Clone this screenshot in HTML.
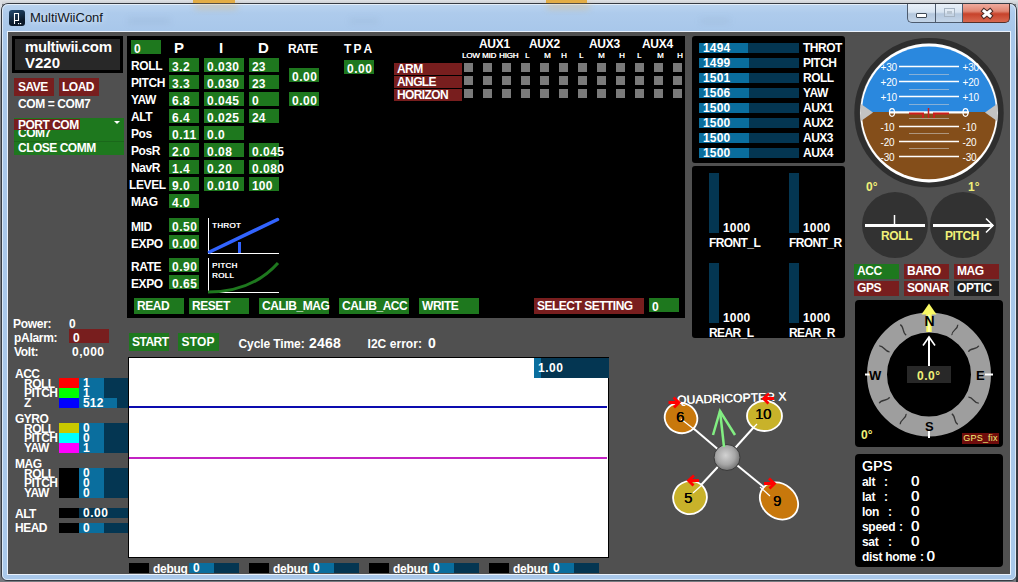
<!DOCTYPE html>
<html><head><meta charset="utf-8"><style>
html,body{margin:0;padding:0;width:1018px;height:582px;overflow:hidden;position:relative;background:#d5d9df}
div,svg{position:absolute}
.t{white-space:nowrap;font-family:'Liberation Sans', sans-serif}
</style></head><body>
<div style="left:0px;top:0px;width:1018px;height:582px;background:#767a80;"></div>
<div style="left:0px;top:0px;width:1018px;height:4px;background:linear-gradient(#dfe2e6,#c9ccd1);"></div>
<div style="left:1016px;top:4px;width:2px;height:578px;background:linear-gradient(#c8ccd2 0,#8a8e94 25px,#3a3e44 60px,#33373d 100%);"></div>
<div style="left:0px;top:0px;width:2px;height:582px;background:linear-gradient(#dcdfe4 0,#d0d3d8 30px,#7a7e84 75px,#767a80 100%);"></div>
<div style="left:193px;top:0px;width:42px;height:3px;background:#e3ad45;"></div>
<div style="left:546px;top:0px;width:41px;height:3px;background:#e3ad45;"></div>
<div style="left:1px;top:3px;width:1014px;height:576px;border:1px solid #363b43;border-radius:7px 7px 6px 6px;background:linear-gradient(#bcd5f0 0px,#aecbec 9px,#a8c7ea 27px,#a9c8ea 100%)"></div>
<div style="left:2px;top:4px;width:1012px;height:574px;border:1px solid rgba(255,255,255,0.6);border-radius:6px 6px 5px 5px;"></div>
<div style="left:7px;top:31px;width:1004px;height:544px;background:#eaf2fc;"></div>
<div style="left:8px;top:32px;width:1002px;height:542px;background:rgb(80,80,80);"></div>
<div style="left:195px;top:3px;width:42px;height:6px;background:rgba(230,175,80,0.35);filter:blur(3px)"></div>
<div style="left:547px;top:3px;width:42px;height:6px;background:rgba(230,175,80,0.35);filter:blur(3px)"></div>
<div style="left:128px;top:18px;width:42px;height:6px;background:rgba(90,110,140,0.09);filter:blur(3px)"></div>
<div style="left:350px;top:18px;width:28px;height:6px;background:rgba(90,110,140,0.08);filter:blur(3px)"></div>
<div style="left:700px;top:18px;width:30px;height:6px;background:rgba(90,110,140,0.07);filter:blur(3px)"></div>
<div style="left:9px;top:10px;width:16px;height:16px;border-radius:3px;background:linear-gradient(160deg,#234a70,#0a1828 70%)"></div>
<svg style="left:0;top:0" width="30" height="30"><path d="M14.5,24 V13.5 H18.5 V20.5 H15" fill="none" stroke="#fff" stroke-width="1.1"/><rect x="18" y="23" width="1.2" height="1.2" fill="#fff"/><rect x="20" y="23" width="1.2" height="1.2" fill="#fff"/></svg>
<div class="t" style="left:30px;top:11px;font-size:13px;line-height:13px;font-weight:400;color:#10161e;text-shadow:0 0 6px rgba(255,255,255,0.9)">MultiWiiConf</div>
<div style="left:907px;top:4px;width:28px;height:18px;border:1px solid #4d5b6e;border-top:none;border-right:none;border-radius:0 0 0 5px;background:linear-gradient(#e9f0f8 0,#d8e4f1 45%,#b4c7dd 55%,#c4d5e8 100%)"></div>
<div style="left:935px;top:4px;width:27px;height:18px;border-left:1px solid #4d5b6e;border-bottom:1px solid #4d5b6e;background:linear-gradient(#e9f0f8 0,#d8e4f1 45%,#b4c7dd 55%,#c4d5e8 100%)"></div>
<div style="left:962px;top:4px;width:46px;height:18px;border:1px solid #54302a;border-top:none;border-left:1px solid #4d5b6e;border-radius:0 0 5px 0;background:linear-gradient(#f0ab9e 0,#e08672 40%,#c7432b 55%,#d8684f 100%)"></div>
<div style="left:916px;top:13px;width:11px;height:5px;background:#fff;border:1px solid #404a56;box-sizing:border-box;border-radius:1px"></div>
<div style="left:944px;top:8px;width:11px;height:9px;background:rgba(255,255,255,0.2);border:1px solid #a5b3c2;box-sizing:border-box"></div>
<div style="left:947px;top:11px;width:5px;height:3px;background:#b8c4d0;"></div>
<svg style="left:978px;top:6px" width="18" height="14"><path d="M6,5 L12,10 M12,5 L6,10" stroke="#4a2a25" stroke-width="5" stroke-linecap="square"/><path d="M6,5 L12,10 M12,5 L6,10" stroke="#fff" stroke-width="3" stroke-linecap="square"/></svg>
<div style="left:0;top:0;width:1010px;height:574px;overflow:hidden">
<div style="left:12px;top:36px;width:111px;height:37px;background:rgb(40,40,40);border:3px solid #000;box-sizing:border-box"></div>
<div class="t" style="left:25px;top:39px;font-size:15px;line-height:15px;font-weight:700;color:#fff;letter-spacing:-0.35px;">multiwii.com</div>
<div class="t" style="left:25px;top:55px;font-size:15px;line-height:15px;font-weight:700;color:#fff;">V220</div>
<div style="left:14px;top:78px;width:40px;height:18px;background:rgb(120,30,30);"></div>
<div class="t" style="left:18px;top:81px;font-size:12px;line-height:12px;font-weight:700;color:#fff;letter-spacing:-0.5px;">SAVE</div>
<div style="left:59px;top:78px;width:40px;height:18px;background:rgb(120,30,30);"></div>
<div class="t" style="left:62px;top:81px;font-size:12px;line-height:12px;font-weight:700;color:#fff;letter-spacing:-0.5px;">LOAD</div>
<div class="t" style="left:18px;top:98px;font-size:12px;line-height:12px;font-weight:700;color:#fff;letter-spacing:-0.4px;">COM = COM7</div>
<div style="left:14px;top:118px;width:110px;height:37px;background:rgb(30,120,30);"></div>
<div style="left:14px;top:141px;width:110px;height:1px;background:rgb(26,104,26);"></div>
<div class="t" style="left:18px;top:127px;font-size:12px;line-height:12px;font-weight:700;color:#fff;letter-spacing:-0.5px;">COM7</div>
<div style="left:14px;top:118px;width:110px;height:11px;background:rgb(30,120,30);"></div>
<div style="left:14px;top:119px;width:66px;height:11px;background:rgb(120,30,30);"></div>
<div class="t" style="left:18px;top:119px;font-size:12px;line-height:12px;font-weight:700;color:#fff;letter-spacing:-0.5px;">PORT COM</div>
<div style="left:114px;top:121px;width:0;height:0;border-left:3px solid transparent;border-right:3px solid transparent;border-top:3px solid #fff"></div>
<div class="t" style="left:18px;top:142px;font-size:12px;line-height:12px;font-weight:700;color:#fff;letter-spacing:-0.5px;">CLOSE COMM</div>
<div class="t" style="left:13px;top:318px;font-size:12px;line-height:12px;font-weight:700;color:#fff;letter-spacing:-0.3px;">Power:</div>
<div class="t" style="left:69px;top:318px;font-size:12px;line-height:12px;font-weight:700;color:#fff;letter-spacing:0.2px;">0</div>
<div style="left:69px;top:329px;width:40px;height:14px;background:rgb(120,30,30);"></div>
<div class="t" style="left:14px;top:332px;font-size:12px;line-height:12px;font-weight:700;color:#fff;letter-spacing:-0.3px;">pAlarm:</div>
<div class="t" style="left:73px;top:332px;font-size:12px;line-height:12px;font-weight:700;color:#fff;letter-spacing:0.2px;">0</div>
<div class="t" style="left:14px;top:346px;font-size:12px;line-height:12px;font-weight:700;color:#fff;letter-spacing:-0.3px;">Volt:</div>
<div class="t" style="left:72px;top:346px;font-size:12px;line-height:12px;font-weight:700;color:#fff;letter-spacing:0.5px;">0,000</div>
<div class="t" style="left:15px;top:368px;font-size:12px;line-height:12px;font-weight:700;color:#fff;letter-spacing:-0.5px;">ACC</div>
<div class="t" style="left:24px;top:378px;font-size:12px;line-height:12px;font-weight:700;color:#fff;letter-spacing:-0.5px;">ROLL</div>
<div class="t" style="left:24px;top:387px;font-size:12px;line-height:12px;font-weight:700;color:#fff;letter-spacing:-0.5px;">PITCH</div>
<div class="t" style="left:24px;top:397px;font-size:12px;line-height:12px;font-weight:700;color:#fff;letter-spacing:-0.5px;">Z</div>
<div style="left:59px;top:378px;width:20px;height:10px;background:#ff0000;"></div>
<div style="left:59px;top:388px;width:20px;height:10px;background:#00ff00;"></div>
<div style="left:59px;top:398px;width:20px;height:10px;background:#0000ff;"></div>
<div style="left:79px;top:378px;width:50px;height:10px;background:rgb(4,54,82);"></div>
<div style="left:79px;top:378px;width:25px;height:10px;background:rgb(10,110,158);"></div>
<div class="t" style="left:83px;top:377px;font-size:12px;line-height:12px;font-weight:700;color:#fff;letter-spacing:0.2px;">1</div>
<div style="left:79px;top:388px;width:50px;height:10px;background:rgb(4,54,82);"></div>
<div style="left:79px;top:388px;width:25px;height:10px;background:rgb(10,110,158);"></div>
<div class="t" style="left:83px;top:387px;font-size:12px;line-height:12px;font-weight:700;color:#fff;letter-spacing:0.2px;">1</div>
<div style="left:79px;top:398px;width:50px;height:10px;background:rgb(4,54,82);"></div>
<div style="left:79px;top:398px;width:38px;height:10px;background:rgb(10,110,158);"></div>
<div class="t" style="left:83px;top:397px;font-size:12px;line-height:12px;font-weight:700;color:#fff;letter-spacing:0.2px;">512</div>
<div class="t" style="left:15px;top:413px;font-size:12px;line-height:12px;font-weight:700;color:#fff;letter-spacing:-0.5px;">GYRO</div>
<div class="t" style="left:24px;top:423px;font-size:12px;line-height:12px;font-weight:700;color:#fff;letter-spacing:-0.5px;">ROLL</div>
<div class="t" style="left:24px;top:432px;font-size:12px;line-height:12px;font-weight:700;color:#fff;letter-spacing:-0.5px;">PITCH</div>
<div class="t" style="left:24px;top:442px;font-size:12px;line-height:12px;font-weight:700;color:#fff;letter-spacing:-0.5px;">YAW</div>
<div style="left:59px;top:423px;width:20px;height:10px;background:rgb(200,200,0);"></div>
<div style="left:59px;top:433px;width:20px;height:10px;background:#00ffff;"></div>
<div style="left:59px;top:443px;width:20px;height:10px;background:#ff00ff;"></div>
<div style="left:79px;top:423px;width:50px;height:10px;background:rgb(4,54,82);"></div>
<div style="left:79px;top:423px;width:25px;height:10px;background:rgb(10,110,158);"></div>
<div class="t" style="left:83px;top:422px;font-size:12px;line-height:12px;font-weight:700;color:#fff;letter-spacing:0.2px;">0</div>
<div style="left:79px;top:433px;width:50px;height:10px;background:rgb(4,54,82);"></div>
<div style="left:79px;top:433px;width:25px;height:10px;background:rgb(10,110,158);"></div>
<div class="t" style="left:83px;top:432px;font-size:12px;line-height:12px;font-weight:700;color:#fff;letter-spacing:0.2px;">0</div>
<div style="left:79px;top:443px;width:50px;height:10px;background:rgb(4,54,82);"></div>
<div style="left:79px;top:443px;width:25px;height:10px;background:rgb(10,110,158);"></div>
<div class="t" style="left:83px;top:442px;font-size:12px;line-height:12px;font-weight:700;color:#fff;letter-spacing:0.2px;">1</div>
<div class="t" style="left:15px;top:458px;font-size:12px;line-height:12px;font-weight:700;color:#fff;letter-spacing:-0.5px;">MAG</div>
<div class="t" style="left:24px;top:468px;font-size:12px;line-height:12px;font-weight:700;color:#fff;letter-spacing:-0.5px;">ROLL</div>
<div class="t" style="left:24px;top:477px;font-size:12px;line-height:12px;font-weight:700;color:#fff;letter-spacing:-0.5px;">PITCH</div>
<div class="t" style="left:24px;top:487px;font-size:12px;line-height:12px;font-weight:700;color:#fff;letter-spacing:-0.5px;">YAW</div>
<div style="left:59px;top:468px;width:20px;height:30px;background:#000;"></div>
<div style="left:79px;top:468px;width:50px;height:10px;background:rgb(4,54,82);"></div>
<div style="left:79px;top:468px;width:25px;height:10px;background:rgb(10,110,158);"></div>
<div class="t" style="left:83px;top:467px;font-size:12px;line-height:12px;font-weight:700;color:#fff;letter-spacing:0.2px;">0</div>
<div style="left:79px;top:478px;width:50px;height:10px;background:rgb(4,54,82);"></div>
<div style="left:79px;top:478px;width:25px;height:10px;background:rgb(10,110,158);"></div>
<div class="t" style="left:83px;top:477px;font-size:12px;line-height:12px;font-weight:700;color:#fff;letter-spacing:0.2px;">0</div>
<div style="left:79px;top:488px;width:50px;height:10px;background:rgb(4,54,82);"></div>
<div style="left:79px;top:488px;width:25px;height:10px;background:rgb(10,110,158);"></div>
<div class="t" style="left:83px;top:487px;font-size:12px;line-height:12px;font-weight:700;color:#fff;letter-spacing:0.2px;">0</div>
<div class="t" style="left:15px;top:508px;font-size:12px;line-height:12px;font-weight:700;color:#fff;letter-spacing:-0.5px;">ALT</div>
<div style="left:59px;top:508px;width:20px;height:10px;background:#000;"></div>
<div style="left:79px;top:508px;width:50px;height:10px;background:rgb(4,54,82);"></div>
<div style="left:79px;top:508px;width:0px;height:10px;background:rgb(10,110,158);"></div>
<div class="t" style="left:83px;top:507px;font-size:12px;line-height:12px;font-weight:700;color:#fff;letter-spacing:0.5px;">0.00</div>
<div class="t" style="left:15px;top:522px;font-size:12px;line-height:12px;font-weight:700;color:#fff;letter-spacing:-0.5px;">HEAD</div>
<div style="left:59px;top:523px;width:20px;height:10px;background:#000;"></div>
<div style="left:79px;top:523px;width:50px;height:10px;background:rgb(4,54,82);"></div>
<div style="left:79px;top:523px;width:25px;height:10px;background:rgb(10,110,158);"></div>
<div class="t" style="left:83px;top:522px;font-size:12px;line-height:12px;font-weight:700;color:#fff;letter-spacing:0.2px;">0</div>
<div style="left:127px;top:36px;width:558px;height:282px;background:#000;"></div>
<div style="left:131px;top:40px;width:30px;height:14px;background:rgb(30,120,30);"></div>
<div class="t" style="left:134px;top:43px;font-size:12px;line-height:12px;font-weight:700;color:#fff;letter-spacing:0.2px;">0</div>
<div class="t" style="left:174px;top:40px;font-size:15px;line-height:15px;font-weight:700;color:#fff;">P</div>
<div class="t" style="left:219px;top:40px;font-size:15px;line-height:15px;font-weight:700;color:#fff;">I</div>
<div class="t" style="left:258px;top:40px;font-size:15px;line-height:15px;font-weight:700;color:#fff;">D</div>
<div class="t" style="left:288px;top:43px;font-size:12px;line-height:12px;font-weight:700;color:#fff;letter-spacing:-0.6px;">RATE</div>
<div class="t" style="left:344px;top:43px;font-size:12px;line-height:12px;font-weight:700;color:#fff;letter-spacing:-0.6px;">T&nbsp;P&nbsp;A</div>
<div class="t" style="left:131px;top:60px;font-size:12px;line-height:12px;font-weight:700;color:#fff;letter-spacing:-0.4px;">ROLL</div>
<div style="left:169px;top:58px;width:30px;height:14px;background:rgb(30,120,30);"></div>
<div class="t" style="left:172px;top:61px;font-size:12px;line-height:12px;font-weight:700;color:#fff;letter-spacing:0.5px;">3.2</div>
<div style="left:204px;top:58px;width:40px;height:14px;background:rgb(30,120,30);"></div>
<div class="t" style="left:207px;top:61px;font-size:12px;line-height:12px;font-weight:700;color:#fff;letter-spacing:0.5px;">0.030</div>
<div style="left:249px;top:58px;width:30px;height:14px;background:rgb(30,120,30);"></div>
<div class="t" style="left:252px;top:61px;font-size:12px;line-height:12px;font-weight:700;color:#fff;letter-spacing:0.2px;">23</div>
<div class="t" style="left:131px;top:77px;font-size:12px;line-height:12px;font-weight:700;color:#fff;letter-spacing:-0.4px;">PITCH</div>
<div style="left:169px;top:75px;width:30px;height:14px;background:rgb(30,120,30);"></div>
<div class="t" style="left:172px;top:78px;font-size:12px;line-height:12px;font-weight:700;color:#fff;letter-spacing:0.5px;">3.3</div>
<div style="left:204px;top:75px;width:40px;height:14px;background:rgb(30,120,30);"></div>
<div class="t" style="left:207px;top:78px;font-size:12px;line-height:12px;font-weight:700;color:#fff;letter-spacing:0.5px;">0.030</div>
<div style="left:249px;top:75px;width:30px;height:14px;background:rgb(30,120,30);"></div>
<div class="t" style="left:252px;top:78px;font-size:12px;line-height:12px;font-weight:700;color:#fff;letter-spacing:0.2px;">23</div>
<div class="t" style="left:131px;top:94px;font-size:12px;line-height:12px;font-weight:700;color:#fff;letter-spacing:-0.4px;">YAW</div>
<div style="left:169px;top:92px;width:30px;height:14px;background:rgb(30,120,30);"></div>
<div class="t" style="left:172px;top:95px;font-size:12px;line-height:12px;font-weight:700;color:#fff;letter-spacing:0.5px;">6.8</div>
<div style="left:204px;top:92px;width:40px;height:14px;background:rgb(30,120,30);"></div>
<div class="t" style="left:207px;top:95px;font-size:12px;line-height:12px;font-weight:700;color:#fff;letter-spacing:0.5px;">0.045</div>
<div style="left:249px;top:92px;width:30px;height:14px;background:rgb(30,120,30);"></div>
<div class="t" style="left:252px;top:95px;font-size:12px;line-height:12px;font-weight:700;color:#fff;letter-spacing:0.2px;">0</div>
<div class="t" style="left:131px;top:111px;font-size:12px;line-height:12px;font-weight:700;color:#fff;letter-spacing:-0.4px;">ALT</div>
<div style="left:169px;top:109px;width:30px;height:14px;background:rgb(30,120,30);"></div>
<div class="t" style="left:172px;top:112px;font-size:12px;line-height:12px;font-weight:700;color:#fff;letter-spacing:0.5px;">6.4</div>
<div style="left:204px;top:109px;width:40px;height:14px;background:rgb(30,120,30);"></div>
<div class="t" style="left:207px;top:112px;font-size:12px;line-height:12px;font-weight:700;color:#fff;letter-spacing:0.5px;">0.025</div>
<div style="left:249px;top:109px;width:30px;height:14px;background:rgb(30,120,30);"></div>
<div class="t" style="left:252px;top:112px;font-size:12px;line-height:12px;font-weight:700;color:#fff;letter-spacing:0.2px;">24</div>
<div class="t" style="left:131px;top:128px;font-size:12px;line-height:12px;font-weight:700;color:#fff;letter-spacing:-0.4px;">Pos</div>
<div style="left:169px;top:126px;width:30px;height:14px;background:rgb(30,120,30);"></div>
<div class="t" style="left:172px;top:129px;font-size:12px;line-height:12px;font-weight:700;color:#fff;letter-spacing:0.5px;">0.11</div>
<div style="left:204px;top:126px;width:40px;height:14px;background:rgb(30,120,30);"></div>
<div class="t" style="left:207px;top:129px;font-size:12px;line-height:12px;font-weight:700;color:#fff;letter-spacing:0.5px;">0.0</div>
<div class="t" style="left:131px;top:145px;font-size:12px;line-height:12px;font-weight:700;color:#fff;letter-spacing:-0.4px;">PosR</div>
<div style="left:169px;top:143px;width:30px;height:14px;background:rgb(30,120,30);"></div>
<div class="t" style="left:172px;top:146px;font-size:12px;line-height:12px;font-weight:700;color:#fff;letter-spacing:0.5px;">2.0</div>
<div style="left:204px;top:143px;width:40px;height:14px;background:rgb(30,120,30);"></div>
<div class="t" style="left:207px;top:146px;font-size:12px;line-height:12px;font-weight:700;color:#fff;letter-spacing:0.5px;">0.08</div>
<div style="left:249px;top:143px;width:30px;height:14px;background:rgb(30,120,30);"></div>
<div class="t" style="left:252px;top:146px;font-size:12px;line-height:12px;font-weight:700;color:#fff;letter-spacing:0.5px;">0.045</div>
<div class="t" style="left:131px;top:162px;font-size:12px;line-height:12px;font-weight:700;color:#fff;letter-spacing:-0.4px;">NavR</div>
<div style="left:169px;top:160px;width:30px;height:14px;background:rgb(30,120,30);"></div>
<div class="t" style="left:172px;top:163px;font-size:12px;line-height:12px;font-weight:700;color:#fff;letter-spacing:0.5px;">1.4</div>
<div style="left:204px;top:160px;width:40px;height:14px;background:rgb(30,120,30);"></div>
<div class="t" style="left:207px;top:163px;font-size:12px;line-height:12px;font-weight:700;color:#fff;letter-spacing:0.5px;">0.20</div>
<div style="left:249px;top:160px;width:30px;height:14px;background:rgb(30,120,30);"></div>
<div class="t" style="left:252px;top:163px;font-size:12px;line-height:12px;font-weight:700;color:#fff;letter-spacing:0.5px;">0.080</div>
<div class="t" style="left:129px;top:179px;font-size:12px;line-height:12px;font-weight:700;color:#fff;letter-spacing:-0.4px;">LEVEL</div>
<div style="left:169px;top:177px;width:30px;height:14px;background:rgb(30,120,30);"></div>
<div class="t" style="left:172px;top:180px;font-size:12px;line-height:12px;font-weight:700;color:#fff;letter-spacing:0.5px;">9.0</div>
<div style="left:204px;top:177px;width:40px;height:14px;background:rgb(30,120,30);"></div>
<div class="t" style="left:207px;top:180px;font-size:12px;line-height:12px;font-weight:700;color:#fff;letter-spacing:0.5px;">0.010</div>
<div style="left:249px;top:177px;width:30px;height:14px;background:rgb(30,120,30);"></div>
<div class="t" style="left:252px;top:180px;font-size:12px;line-height:12px;font-weight:700;color:#fff;letter-spacing:0.2px;">100</div>
<div class="t" style="left:131px;top:196px;font-size:12px;line-height:12px;font-weight:700;color:#fff;letter-spacing:-0.4px;">MAG</div>
<div style="left:169px;top:194px;width:30px;height:14px;background:rgb(30,120,30);"></div>
<div class="t" style="left:172px;top:197px;font-size:12px;line-height:12px;font-weight:700;color:#fff;letter-spacing:0.5px;">4.0</div>
<div style="left:289px;top:68px;width:30px;height:14px;background:rgb(30,120,30);"></div>
<div class="t" style="left:292px;top:71px;font-size:12px;line-height:12px;font-weight:700;color:#fff;letter-spacing:0.5px;">0.00</div>
<div style="left:289px;top:92px;width:30px;height:14px;background:rgb(30,120,30);"></div>
<div class="t" style="left:292px;top:95px;font-size:12px;line-height:12px;font-weight:700;color:#fff;letter-spacing:0.5px;">0.00</div>
<div style="left:344px;top:60px;width:30px;height:14px;background:rgb(30,120,30);"></div>
<div class="t" style="left:347px;top:63px;font-size:12px;line-height:12px;font-weight:700;color:#fff;letter-spacing:0.5px;">0.00</div>
<div class="t" style="left:131px;top:221px;font-size:12px;line-height:12px;font-weight:700;color:#fff;letter-spacing:-0.4px;">MID</div>
<div style="left:169px;top:218px;width:30px;height:14px;background:rgb(30,120,30);"></div>
<div class="t" style="left:172px;top:221px;font-size:12px;line-height:12px;font-weight:700;color:#fff;letter-spacing:0.5px;">0.50</div>
<div class="t" style="left:131px;top:238px;font-size:12px;line-height:12px;font-weight:700;color:#fff;letter-spacing:-0.4px;">EXPO</div>
<div style="left:169px;top:235px;width:30px;height:14px;background:rgb(30,120,30);"></div>
<div class="t" style="left:172px;top:238px;font-size:12px;line-height:12px;font-weight:700;color:#fff;letter-spacing:0.5px;">0.00</div>
<div class="t" style="left:131px;top:261px;font-size:12px;line-height:12px;font-weight:700;color:#fff;letter-spacing:-0.4px;">RATE</div>
<div style="left:169px;top:258px;width:30px;height:14px;background:rgb(30,120,30);"></div>
<div class="t" style="left:172px;top:261px;font-size:12px;line-height:12px;font-weight:700;color:#fff;letter-spacing:0.5px;">0.90</div>
<div class="t" style="left:131px;top:278px;font-size:12px;line-height:12px;font-weight:700;color:#fff;letter-spacing:-0.4px;">EXPO</div>
<div style="left:169px;top:275px;width:30px;height:14px;background:rgb(30,120,30);"></div>
<div class="t" style="left:172px;top:278px;font-size:12px;line-height:12px;font-weight:700;color:#fff;letter-spacing:0.5px;">0.65</div>
<svg style="left:0;top:0" width="1018" height="582">
<line x1="208.5" y1="218" x2="208.5" y2="254" stroke="#fff" stroke-width="1"/>
<line x1="208" y1="253.5" x2="279" y2="253.5" stroke="#fff" stroke-width="1"/>
<line x1="209.5" y1="252" x2="277.5" y2="219.5" stroke="rgb(50,100,255)" stroke-width="3.5" stroke-linecap="round"/>
<line x1="239.5" y1="242" x2="239.5" y2="253" stroke="rgb(50,100,255)" stroke-width="3"/>
<line x1="208.5" y1="258" x2="208.5" y2="293" stroke="#fff" stroke-width="1"/>
<line x1="208" y1="292.5" x2="279" y2="292.5" stroke="#fff" stroke-width="1"/>
<path d="M208,292 Q252,292 278,263" fill="none" stroke="rgb(30,120,30)" stroke-width="3"/>
</svg>
<div class="t" style="left:212px;top:222px;font-size:8px;line-height:8px;font-weight:400;color:#fff;letter-spacing:0.3px;text-shadow:0.3px 0 0 #fff">THROT</div>
<div class="t" style="left:212px;top:262px;font-size:8px;line-height:8px;font-weight:400;color:#fff;letter-spacing:0.3px;text-shadow:0.3px 0 0 #fff">PITCH</div>
<div class="t" style="left:212px;top:272px;font-size:8px;line-height:8px;font-weight:400;color:#fff;letter-spacing:0.3px;text-shadow:0.3px 0 0 #fff">ROLL</div>
<div style="left:134px;top:298px;width:50px;height:16px;background:rgb(30,120,30);"></div>
<div class="t" style="left:137px;top:300px;font-size:12px;line-height:12px;font-weight:700;color:#fff;letter-spacing:-0.45px;">READ</div>
<div style="left:189px;top:298px;width:60px;height:16px;background:rgb(30,120,30);"></div>
<div class="t" style="left:192px;top:300px;font-size:12px;line-height:12px;font-weight:700;color:#fff;letter-spacing:-0.45px;">RESET</div>
<div style="left:259px;top:298px;width:70px;height:16px;background:rgb(30,120,30);"></div>
<div class="t" style="left:262px;top:300px;font-size:12px;line-height:12px;font-weight:700;color:#fff;letter-spacing:-0.45px;">CALIB_MAG</div>
<div style="left:339px;top:298px;width:70px;height:16px;background:rgb(30,120,30);"></div>
<div class="t" style="left:342px;top:300px;font-size:12px;line-height:12px;font-weight:700;color:#fff;letter-spacing:-0.45px;">CALIB_ACC</div>
<div style="left:419px;top:298px;width:60px;height:16px;background:rgb(30,120,30);"></div>
<div class="t" style="left:422px;top:300px;font-size:12px;line-height:12px;font-weight:700;color:#fff;letter-spacing:-0.45px;">WRITE</div>
<div style="left:534px;top:298px;width:110px;height:16px;background:rgb(120,30,30);"></div>
<div class="t" style="left:537px;top:300px;font-size:12px;line-height:12px;font-weight:700;color:#fff;letter-spacing:-0.5px;">SELECT SETTING</div>
<div style="left:649px;top:298px;width:30px;height:14px;background:rgb(30,120,30);"></div>
<div class="t" style="left:652px;top:301px;font-size:12px;line-height:12px;font-weight:700;color:#fff;letter-spacing:0.2px;">0</div>
<div style="left:394px;top:63px;width:68px;height:12px;background:rgb(120,30,30);"></div>
<div class="t" style="left:397px;top:63px;font-size:12px;line-height:12px;font-weight:700;color:#fff;letter-spacing:-0.6px;">ARM</div>
<div style="left:464px;top:63px;width:9px;height:9px;background:rgb(122,122,122);"></div>
<div style="left:483px;top:63px;width:9px;height:9px;background:rgb(122,122,122);"></div>
<div style="left:502px;top:63px;width:9px;height:9px;background:rgb(122,122,122);"></div>
<div style="left:521px;top:63px;width:9px;height:9px;background:rgb(122,122,122);"></div>
<div style="left:540px;top:63px;width:9px;height:9px;background:rgb(122,122,122);"></div>
<div style="left:559px;top:63px;width:9px;height:9px;background:rgb(122,122,122);"></div>
<div style="left:578px;top:63px;width:9px;height:9px;background:rgb(122,122,122);"></div>
<div style="left:597px;top:63px;width:9px;height:9px;background:rgb(122,122,122);"></div>
<div style="left:616px;top:63px;width:9px;height:9px;background:rgb(122,122,122);"></div>
<div style="left:635px;top:63px;width:9px;height:9px;background:rgb(122,122,122);"></div>
<div style="left:654px;top:63px;width:9px;height:9px;background:rgb(122,122,122);"></div>
<div style="left:673px;top:63px;width:9px;height:9px;background:rgb(122,122,122);"></div>
<div style="left:394px;top:76px;width:68px;height:12px;background:rgb(120,30,30);"></div>
<div class="t" style="left:397px;top:76px;font-size:12px;line-height:12px;font-weight:700;color:#fff;letter-spacing:-0.6px;">ANGLE</div>
<div style="left:464px;top:76px;width:9px;height:9px;background:rgb(122,122,122);"></div>
<div style="left:483px;top:76px;width:9px;height:9px;background:rgb(122,122,122);"></div>
<div style="left:502px;top:76px;width:9px;height:9px;background:rgb(122,122,122);"></div>
<div style="left:521px;top:76px;width:9px;height:9px;background:rgb(122,122,122);"></div>
<div style="left:540px;top:76px;width:9px;height:9px;background:rgb(122,122,122);"></div>
<div style="left:559px;top:76px;width:9px;height:9px;background:rgb(122,122,122);"></div>
<div style="left:578px;top:76px;width:9px;height:9px;background:rgb(122,122,122);"></div>
<div style="left:597px;top:76px;width:9px;height:9px;background:rgb(122,122,122);"></div>
<div style="left:616px;top:76px;width:9px;height:9px;background:rgb(122,122,122);"></div>
<div style="left:635px;top:76px;width:9px;height:9px;background:rgb(122,122,122);"></div>
<div style="left:654px;top:76px;width:9px;height:9px;background:rgb(122,122,122);"></div>
<div style="left:673px;top:76px;width:9px;height:9px;background:rgb(122,122,122);"></div>
<div style="left:394px;top:89px;width:68px;height:12px;background:rgb(120,30,30);"></div>
<div class="t" style="left:397px;top:89px;font-size:12px;line-height:12px;font-weight:700;color:#fff;letter-spacing:-0.6px;">HORIZON</div>
<div style="left:464px;top:89px;width:9px;height:9px;background:rgb(122,122,122);"></div>
<div style="left:483px;top:89px;width:9px;height:9px;background:rgb(122,122,122);"></div>
<div style="left:502px;top:89px;width:9px;height:9px;background:rgb(122,122,122);"></div>
<div style="left:521px;top:89px;width:9px;height:9px;background:rgb(122,122,122);"></div>
<div style="left:540px;top:89px;width:9px;height:9px;background:rgb(122,122,122);"></div>
<div style="left:559px;top:89px;width:9px;height:9px;background:rgb(122,122,122);"></div>
<div style="left:578px;top:89px;width:9px;height:9px;background:rgb(122,122,122);"></div>
<div style="left:597px;top:89px;width:9px;height:9px;background:rgb(122,122,122);"></div>
<div style="left:616px;top:89px;width:9px;height:9px;background:rgb(122,122,122);"></div>
<div style="left:635px;top:89px;width:9px;height:9px;background:rgb(122,122,122);"></div>
<div style="left:654px;top:89px;width:9px;height:9px;background:rgb(122,122,122);"></div>
<div style="left:673px;top:89px;width:9px;height:9px;background:rgb(122,122,122);"></div>
<div class="t" style="left:479px;top:38px;font-size:12px;line-height:12px;font-weight:700;color:#fff;letter-spacing:-0.3px;">AUX1</div>
<div class="t" style="left:529px;top:38px;font-size:12px;line-height:12px;font-weight:700;color:#fff;letter-spacing:-0.3px;">AUX2</div>
<div class="t" style="left:589px;top:38px;font-size:12px;line-height:12px;font-weight:700;color:#fff;letter-spacing:-0.3px;">AUX3</div>
<div class="t" style="left:642px;top:38px;font-size:12px;line-height:12px;font-weight:700;color:#fff;letter-spacing:-0.3px;">AUX4</div>
<div class="t" style="left:462px;top:52px;font-size:8px;line-height:8px;font-weight:400;color:#fff;letter-spacing:-0.2px;text-shadow:0.3px 0 0 #fff">LOW</div>
<div class="t" style="left:482px;top:52px;font-size:8px;line-height:8px;font-weight:400;color:#fff;letter-spacing:-0.2px;text-shadow:0.3px 0 0 #fff">MID</div>
<div class="t" style="left:499px;top:52px;font-size:8px;line-height:8px;font-weight:400;color:#fff;letter-spacing:-0.2px;text-shadow:0.3px 0 0 #fff">HIGH</div>
<div class="t" style="left:525px;top:52px;font-size:8px;line-height:8px;font-weight:400;color:#fff;letter-spacing:-0.2px;text-shadow:0.3px 0 0 #fff">L</div>
<div class="t" style="left:544px;top:52px;font-size:8px;line-height:8px;font-weight:400;color:#fff;letter-spacing:-0.2px;text-shadow:0.3px 0 0 #fff">M</div>
<div class="t" style="left:561px;top:52px;font-size:8px;line-height:8px;font-weight:400;color:#fff;letter-spacing:-0.2px;text-shadow:0.3px 0 0 #fff">H</div>
<div class="t" style="left:579px;top:52px;font-size:8px;line-height:8px;font-weight:400;color:#fff;letter-spacing:-0.2px;text-shadow:0.3px 0 0 #fff">L</div>
<div class="t" style="left:598px;top:52px;font-size:8px;line-height:8px;font-weight:400;color:#fff;letter-spacing:-0.2px;text-shadow:0.3px 0 0 #fff">M</div>
<div class="t" style="left:619px;top:52px;font-size:8px;line-height:8px;font-weight:400;color:#fff;letter-spacing:-0.2px;text-shadow:0.3px 0 0 #fff">H</div>
<div class="t" style="left:637px;top:52px;font-size:8px;line-height:8px;font-weight:400;color:#fff;letter-spacing:-0.2px;text-shadow:0.3px 0 0 #fff">L</div>
<div class="t" style="left:657px;top:52px;font-size:8px;line-height:8px;font-weight:400;color:#fff;letter-spacing:-0.2px;text-shadow:0.3px 0 0 #fff">M</div>
<div class="t" style="left:677px;top:52px;font-size:8px;line-height:8px;font-weight:400;color:#fff;letter-spacing:-0.2px;text-shadow:0.3px 0 0 #fff">H</div>
<div style="left:692px;top:36px;width:153px;height:127px;background:#000;border-radius:3px"></div>
<div style="left:699px;top:43px;width:100px;height:10px;background:rgb(4,54,82);"></div>
<div style="left:699px;top:43px;width:49px;height:10px;background:rgb(10,110,158);"></div>
<div class="t" style="left:703px;top:42px;font-size:12px;line-height:12px;font-weight:700;color:#fff;letter-spacing:0.2px;">1494</div>
<div class="t" style="left:803px;top:42px;font-size:12px;line-height:12px;font-weight:700;color:#fff;letter-spacing:-0.5px;">THROT</div>
<div style="left:699px;top:58px;width:100px;height:10px;background:rgb(4,54,82);"></div>
<div style="left:699px;top:58px;width:50px;height:10px;background:rgb(10,110,158);"></div>
<div class="t" style="left:703px;top:57px;font-size:12px;line-height:12px;font-weight:700;color:#fff;letter-spacing:0.2px;">1499</div>
<div class="t" style="left:803px;top:57px;font-size:12px;line-height:12px;font-weight:700;color:#fff;letter-spacing:-0.5px;">PITCH</div>
<div style="left:699px;top:73px;width:100px;height:10px;background:rgb(4,54,82);"></div>
<div style="left:699px;top:73px;width:50px;height:10px;background:rgb(10,110,158);"></div>
<div class="t" style="left:703px;top:72px;font-size:12px;line-height:12px;font-weight:700;color:#fff;letter-spacing:0.2px;">1501</div>
<div class="t" style="left:803px;top:72px;font-size:12px;line-height:12px;font-weight:700;color:#fff;letter-spacing:-0.5px;">ROLL</div>
<div style="left:699px;top:88px;width:100px;height:10px;background:rgb(4,54,82);"></div>
<div style="left:699px;top:88px;width:50px;height:10px;background:rgb(10,110,158);"></div>
<div class="t" style="left:703px;top:87px;font-size:12px;line-height:12px;font-weight:700;color:#fff;letter-spacing:0.2px;">1506</div>
<div class="t" style="left:803px;top:87px;font-size:12px;line-height:12px;font-weight:700;color:#fff;letter-spacing:-0.5px;">YAW</div>
<div style="left:699px;top:103px;width:100px;height:10px;background:rgb(4,54,82);"></div>
<div style="left:699px;top:103px;width:50px;height:10px;background:rgb(10,110,158);"></div>
<div class="t" style="left:703px;top:102px;font-size:12px;line-height:12px;font-weight:700;color:#fff;letter-spacing:0.2px;">1500</div>
<div class="t" style="left:803px;top:102px;font-size:12px;line-height:12px;font-weight:700;color:#fff;letter-spacing:-0.5px;">AUX1</div>
<div style="left:699px;top:118px;width:100px;height:10px;background:rgb(4,54,82);"></div>
<div style="left:699px;top:118px;width:50px;height:10px;background:rgb(10,110,158);"></div>
<div class="t" style="left:703px;top:117px;font-size:12px;line-height:12px;font-weight:700;color:#fff;letter-spacing:0.2px;">1500</div>
<div class="t" style="left:803px;top:117px;font-size:12px;line-height:12px;font-weight:700;color:#fff;letter-spacing:-0.5px;">AUX2</div>
<div style="left:699px;top:133px;width:100px;height:10px;background:rgb(4,54,82);"></div>
<div style="left:699px;top:133px;width:50px;height:10px;background:rgb(10,110,158);"></div>
<div class="t" style="left:703px;top:132px;font-size:12px;line-height:12px;font-weight:700;color:#fff;letter-spacing:0.2px;">1500</div>
<div class="t" style="left:803px;top:132px;font-size:12px;line-height:12px;font-weight:700;color:#fff;letter-spacing:-0.5px;">AUX3</div>
<div style="left:699px;top:148px;width:100px;height:10px;background:rgb(4,54,82);"></div>
<div style="left:699px;top:148px;width:50px;height:10px;background:rgb(10,110,158);"></div>
<div class="t" style="left:703px;top:147px;font-size:12px;line-height:12px;font-weight:700;color:#fff;letter-spacing:0.2px;">1500</div>
<div class="t" style="left:803px;top:147px;font-size:12px;line-height:12px;font-weight:700;color:#fff;letter-spacing:-0.5px;">AUX4</div>
<div style="left:692px;top:166px;width:153px;height:172px;background:#000;border-radius:3px"></div>
<div style="left:0;top:0;width:845px;height:339px;overflow:hidden">
<div style="left:709px;top:173px;width:10px;height:60px;background:rgb(4,54,82);"></div>
<div class="t" style="left:723px;top:222px;font-size:12px;line-height:12px;font-weight:700;color:#fff;letter-spacing:0.2px;">1000</div>
<div class="t" style="left:709px;top:237px;font-size:12px;line-height:12px;font-weight:700;color:#fff;letter-spacing:-0.6px;">FRONT_L</div>
<div style="left:789px;top:173px;width:10px;height:60px;background:rgb(4,54,82);"></div>
<div class="t" style="left:803px;top:222px;font-size:12px;line-height:12px;font-weight:700;color:#fff;letter-spacing:0.2px;">1000</div>
<div class="t" style="left:789px;top:237px;font-size:12px;line-height:12px;font-weight:700;color:#fff;letter-spacing:-0.6px;">FRONT_R</div>
<div style="left:709px;top:263px;width:10px;height:60px;background:rgb(4,54,82);"></div>
<div class="t" style="left:723px;top:312px;font-size:12px;line-height:12px;font-weight:700;color:#fff;letter-spacing:0.2px;">1000</div>
<div class="t" style="left:709px;top:327px;font-size:12px;line-height:12px;font-weight:700;color:#fff;letter-spacing:-0.6px;">REAR_L</div>
<div style="left:789px;top:263px;width:10px;height:60px;background:rgb(4,54,82);"></div>
<div class="t" style="left:803px;top:312px;font-size:12px;line-height:12px;font-weight:700;color:#fff;letter-spacing:0.2px;">1000</div>
<div class="t" style="left:789px;top:327px;font-size:12px;line-height:12px;font-weight:700;color:#fff;letter-spacing:-0.6px;">REAR_R</div>
</div>
<div style="left:855px;top:300px;width:148px;height:147px;background:#000;border-radius:4px"></div>
<div style="left:855px;top:454px;width:148px;height:113px;background:#000;border-radius:4px"></div>
<svg style="left:0;top:0" width="1018" height="582">
<defs><clipPath id="hc"><ellipse cx="929" cy="112.8" rx="67.1" ry="66.4"/></clipPath></defs>
<circle cx="929" cy="112.7" r="72" fill="none" stroke="rgb(46,46,46)" stroke-width="5.4"/>
<ellipse cx="929" cy="112.9" rx="68.8" ry="69.5" fill="#fff"/>
<g clip-path="url(#hc)"><rect x="850" y="30" width="160" height="82" fill="rgb(42,136,222)"/><rect x="850" y="112" width="160" height="80" fill="rgb(132,78,26)"/></g>
<line x1="899" y1="66.5" x2="959" y2="66.5" stroke="#fff" stroke-width="1.6"/>
<line x1="899" y1="81.5" x2="959" y2="81.5" stroke="#fff" stroke-width="1.6"/>
<line x1="899" y1="96.5" x2="959" y2="96.5" stroke="#fff" stroke-width="1.6"/>
<line x1="899" y1="126.5" x2="959" y2="126.5" stroke="#fff" stroke-width="1.6"/>
<line x1="899" y1="141.5" x2="959" y2="141.5" stroke="#fff" stroke-width="1.6"/>
<line x1="899" y1="156.5" x2="959" y2="156.5" stroke="#fff" stroke-width="1.6"/>
<line x1="909" y1="74.5" x2="949" y2="74.5" stroke="rgba(210,210,210,0.55)" stroke-width="1.2"/>
<line x1="909" y1="89.5" x2="949" y2="89.5" stroke="rgba(210,210,210,0.55)" stroke-width="1.2"/>
<line x1="909" y1="104.5" x2="949" y2="104.5" stroke="rgba(210,210,210,0.55)" stroke-width="1.2"/>
<line x1="909" y1="118.5" x2="949" y2="118.5" stroke="rgba(210,210,210,0.55)" stroke-width="1.2"/>
<line x1="909" y1="133.5" x2="949" y2="133.5" stroke="rgba(210,210,210,0.55)" stroke-width="1.2"/>
<line x1="909" y1="148.5" x2="949" y2="148.5" stroke="rgba(210,210,210,0.55)" stroke-width="1.2"/>
<line x1="889" y1="112.3" x2="969" y2="112.3" stroke="#fff" stroke-width="2.2"/>
<ellipse cx="892" cy="112.5" rx="2.5" ry="3.8" fill="none" stroke="#fff" stroke-width="1.2"/>
<ellipse cx="965.5" cy="112.5" rx="2.5" ry="3.8" fill="none" stroke="#fff" stroke-width="1.2"/>
<g stroke="rgb(205,30,30)" fill="none"><path d="M909,113.5 H923 V118 M949,113.5 H934 V118" stroke-width="2"/><path d="M928.5,108 V118" stroke-width="1.5"/></g>
<polygon points="861,104 873,112.5 861,121" fill="rgb(195,195,195)"/>
<polygon points="997,104 985,112.5 997,121" fill="rgb(195,195,195)"/>
<circle cx="895" cy="225" r="33" fill="rgb(50,50,50)"/>
<circle cx="963" cy="225" r="33" fill="rgb(50,50,50)"/>
<line x1="865" y1="225.5" x2="925" y2="225.5" stroke="#fff" stroke-width="3.2"/>
<line x1="894.5" y1="215" x2="894.5" y2="225" stroke="#fff" stroke-width="1.5"/>
<line x1="933" y1="225.5" x2="993" y2="225.5" stroke="#fff" stroke-width="3.2"/>
<polyline points="986,218.5 993,225.5 986,232.5" fill="none" stroke="#fff" stroke-width="1.6"/>
<circle cx="929" cy="374.5" r="52" fill="none" stroke="rgb(158,158,158)" stroke-width="20"/>
<path d="M957.8,324.7 C958.0,329.5 951.5,330.3 951.8,335.1" fill="none" stroke="rgb(55,55,55)" stroke-width="1.3"/>
<path d="M978.8,345.8 C976.6,350.0 970.6,347.5 968.4,351.8" fill="none" stroke="rgb(55,55,55)" stroke-width="1.3"/>
<path d="M978.8,403.2 C974.0,403.5 973.2,397.0 968.4,397.2" fill="none" stroke="rgb(55,55,55)" stroke-width="1.3"/>
<path d="M957.8,424.3 C953.5,422.1 956.0,416.1 951.8,413.9" fill="none" stroke="rgb(55,55,55)" stroke-width="1.3"/>
<path d="M900.2,424.3 C900.0,419.5 906.5,418.7 906.2,413.9" fill="none" stroke="rgb(55,55,55)" stroke-width="1.3"/>
<path d="M879.2,403.2 C881.4,399.0 887.4,401.5 889.6,397.2" fill="none" stroke="rgb(55,55,55)" stroke-width="1.3"/>
<path d="M879.2,345.8 C884.0,345.5 884.8,352.0 889.6,351.8" fill="none" stroke="rgb(55,55,55)" stroke-width="1.3"/>
<path d="M900.2,324.7 C904.5,326.9 902.0,332.9 906.2,335.1" fill="none" stroke="rgb(55,55,55)" stroke-width="1.3"/>
<rect x="926.3" y="313" width="5.4" height="19" fill="rgb(250,250,100)"/>
<rect x="928.2" y="313" width="1.6" height="19" fill="rgba(255,255,230,0.7)"/>
<polygon points="929,303.5 921.5,314.5 936.5,314.5" fill="rgb(250,250,100)"/>
<line x1="929" y1="337" x2="929" y2="374" stroke="#fff" stroke-width="2"/>
<polyline points="923,345.5 929,337 935,345.5" fill="none" stroke="#fff" stroke-width="1.6"/>
<line x1="865" y1="374.5" x2="871" y2="374.5" stroke="#fff" stroke-width="2"/>
<line x1="985" y1="374.5" x2="993" y2="374.5" stroke="#fff" stroke-width="2"/>
<line x1="929" y1="431" x2="929" y2="438" stroke="#fff" stroke-width="2"/>
</svg>
<div class="t" style="left:881px;top:230px;font-size:12px;line-height:12px;font-weight:700;color:rgb(240,240,120);letter-spacing:-0.4px;">ROLL</div>
<div class="t" style="left:945px;top:230px;font-size:12px;line-height:12px;font-weight:700;color:rgb(240,240,120);letter-spacing:-0.4px;">PITCH</div>
<div class="t" style="left:866px;top:181px;font-size:12px;line-height:12px;font-weight:700;color:rgb(240,240,120);">0&deg;</div>
<div class="t" style="left:968px;top:181px;font-size:12px;line-height:12px;font-weight:700;color:rgb(240,240,120);">1&deg;</div>
<div class="t" style="left:880.5px;top:63.0px;font-size:10px;line-height:10px;font-weight:400;color:#fff;letter-spacing:-0.2px;">+30</div>
<div class="t" style="left:962.5px;top:63.0px;font-size:10px;line-height:10px;font-weight:400;color:#fff;letter-spacing:-0.2px;">+30</div>
<div class="t" style="left:880.5px;top:78.0px;font-size:10px;line-height:10px;font-weight:400;color:#fff;letter-spacing:-0.2px;">+20</div>
<div class="t" style="left:962.5px;top:78.0px;font-size:10px;line-height:10px;font-weight:400;color:#fff;letter-spacing:-0.2px;">+20</div>
<div class="t" style="left:880.5px;top:93.0px;font-size:10px;line-height:10px;font-weight:400;color:#fff;letter-spacing:-0.2px;">+10</div>
<div class="t" style="left:962.5px;top:93.0px;font-size:10px;line-height:10px;font-weight:400;color:#fff;letter-spacing:-0.2px;">+10</div>
<div class="t" style="left:880.5px;top:123.0px;font-size:10px;line-height:10px;font-weight:400;color:#fff;letter-spacing:-0.2px;">-10</div>
<div class="t" style="left:962.5px;top:123.0px;font-size:10px;line-height:10px;font-weight:400;color:#fff;letter-spacing:-0.2px;">-10</div>
<div class="t" style="left:880.5px;top:138.0px;font-size:10px;line-height:10px;font-weight:400;color:#fff;letter-spacing:-0.2px;">-20</div>
<div class="t" style="left:962.5px;top:138.0px;font-size:10px;line-height:10px;font-weight:400;color:#fff;letter-spacing:-0.2px;">-20</div>
<div class="t" style="left:880.5px;top:153.0px;font-size:10px;line-height:10px;font-weight:400;color:#fff;letter-spacing:-0.2px;">-30</div>
<div class="t" style="left:962.5px;top:153.0px;font-size:10px;line-height:10px;font-weight:400;color:#fff;letter-spacing:-0.2px;">-30</div>
<div style="left:854px;top:264px;width:45px;height:15px;background:rgb(30,120,30);"></div>
<div class="t" style="left:857px;top:265px;font-size:12px;line-height:12px;font-weight:700;color:#fff;letter-spacing:-0.4px;">ACC</div>
<div style="left:904px;top:264px;width:45px;height:15px;background:rgb(120,30,30);"></div>
<div class="t" style="left:907px;top:265px;font-size:12px;line-height:12px;font-weight:700;color:#fff;letter-spacing:-0.4px;">BARO</div>
<div style="left:954px;top:264px;width:45px;height:15px;background:rgb(120,30,30);"></div>
<div class="t" style="left:957px;top:265px;font-size:12px;line-height:12px;font-weight:700;color:#fff;letter-spacing:-0.4px;">MAG</div>
<div style="left:854px;top:281px;width:45px;height:15px;background:rgb(120,30,30);"></div>
<div class="t" style="left:857px;top:282px;font-size:12px;line-height:12px;font-weight:700;color:#fff;letter-spacing:-0.4px;">GPS</div>
<div style="left:904px;top:281px;width:45px;height:15px;background:rgb(120,30,30);"></div>
<div class="t" style="left:907px;top:282px;font-size:12px;line-height:12px;font-weight:700;color:#fff;letter-spacing:-0.4px;">SONAR</div>
<div style="left:954px;top:281px;width:45px;height:15px;background:rgb(30,30,30);"></div>
<div class="t" style="left:957px;top:282px;font-size:12px;line-height:12px;font-weight:700;color:#fff;letter-spacing:-0.4px;">OPTIC</div>
<div class="t" style="left:924.5px;top:314px;font-size:14px;line-height:14px;font-weight:700;color:#000;">N</div>
<div class="t" style="left:869px;top:369px;font-size:13px;line-height:13px;font-weight:700;color:#000;">W</div>
<div class="t" style="left:976px;top:369px;font-size:13px;line-height:13px;font-weight:700;color:#000;">E</div>
<div class="t" style="left:925px;top:420px;font-size:13px;line-height:13px;font-weight:700;color:#000;">S</div>
<div style="left:907px;top:366px;width:44px;height:17px;background:rgb(40,40,40);"></div>
<div class="t" style="left:917px;top:370px;font-size:12px;line-height:12px;font-weight:700;color:rgb(240,240,120);letter-spacing:0.5px;">0.0&deg;</div>
<div class="t" style="left:861px;top:429px;font-size:12px;line-height:12px;font-weight:700;color:rgb(240,240,120);">0&deg;</div>
<div style="left:962px;top:433px;width:37px;height:11px;background:rgb(112,12,12);"></div>
<div class="t" style="left:962px;width:37px;text-align:center;top:433px;font-size:9px;line-height:11px;color:rgb(240,240,120);letter-spacing:0.2px">GPS_fix</div>
<div class="t" style="left:862px;top:459px;font-size:14px;line-height:14px;font-weight:400;color:#fff;letter-spacing:0.2px;text-shadow:0.3px 0 0 #fff">GPS</div>
<div class="t" style="left:862px;top:476px;font-size:12px;line-height:12px;font-weight:700;color:#fff;letter-spacing:-0.3px;">alt</div>
<div class="t" style="left:884px;top:476px;font-size:12px;line-height:12px;font-weight:700;color:#fff;letter-spacing:-0.5px;">:</div>
<div class="t" style="left:911px;top:474px;font-size:14.5px;line-height:14.5px;font-weight:400;color:#fff;text-shadow:0.5px 0 0 #fff">0</div>
<div class="t" style="left:862px;top:491px;font-size:12px;line-height:12px;font-weight:700;color:#fff;letter-spacing:-0.3px;">lat</div>
<div class="t" style="left:884px;top:491px;font-size:12px;line-height:12px;font-weight:700;color:#fff;letter-spacing:-0.5px;">:</div>
<div class="t" style="left:911px;top:489px;font-size:14.5px;line-height:14.5px;font-weight:400;color:#fff;text-shadow:0.5px 0 0 #fff">0</div>
<div class="t" style="left:862px;top:506px;font-size:12px;line-height:12px;font-weight:700;color:#fff;letter-spacing:-0.3px;">lon</div>
<div class="t" style="left:888px;top:506px;font-size:12px;line-height:12px;font-weight:700;color:#fff;letter-spacing:-0.5px;">:</div>
<div class="t" style="left:911px;top:504px;font-size:14.5px;line-height:14.5px;font-weight:400;color:#fff;text-shadow:0.5px 0 0 #fff">0</div>
<div class="t" style="left:862px;top:521px;font-size:12px;line-height:12px;font-weight:700;color:#fff;letter-spacing:-0.3px;">speed</div>
<div class="t" style="left:899px;top:521px;font-size:12px;line-height:12px;font-weight:700;color:#fff;letter-spacing:-0.5px;">:</div>
<div class="t" style="left:911px;top:519px;font-size:14.5px;line-height:14.5px;font-weight:400;color:#fff;text-shadow:0.5px 0 0 #fff">0</div>
<div class="t" style="left:862px;top:536px;font-size:12px;line-height:12px;font-weight:700;color:#fff;letter-spacing:-0.3px;">sat</div>
<div class="t" style="left:888px;top:536px;font-size:12px;line-height:12px;font-weight:700;color:#fff;letter-spacing:-0.5px;">:</div>
<div class="t" style="left:911px;top:534px;font-size:14.5px;line-height:14.5px;font-weight:400;color:#fff;text-shadow:0.5px 0 0 #fff">0</div>
<div class="t" style="left:862px;top:551px;font-size:12px;line-height:12px;font-weight:700;color:#fff;letter-spacing:-0.3px;">dist home</div>
<div class="t" style="left:920px;top:551px;font-size:12px;line-height:12px;font-weight:700;color:#fff;letter-spacing:-0.5px;">:</div>
<div class="t" style="left:926.5px;top:549px;font-size:14.5px;line-height:14.5px;font-weight:400;color:#fff;text-shadow:0.5px 0 0 #fff">0</div>
<div style="left:129px;top:333px;width:40px;height:18px;background:rgb(30,120,30);"></div>
<div class="t" style="left:132px;top:336px;font-size:12px;line-height:12px;font-weight:700;color:#fff;letter-spacing:-0.5px;">START</div>
<div style="left:178px;top:333px;width:41px;height:18px;background:rgb(30,120,30);"></div>
<div class="t" style="left:181.5px;top:336px;font-size:12px;line-height:12px;font-weight:700;color:#fff;letter-spacing:0.2px;">STOP</div>
<div class="t" style="left:238.5px;top:338px;font-size:12px;line-height:12px;font-weight:700;color:#fff;letter-spacing:-0.1px;">Cycle Time:</div>
<div class="t" style="left:309px;top:336px;font-size:14px;line-height:14px;font-weight:700;color:#fff;letter-spacing:0.2px;">2468</div>
<div class="t" style="left:367.5px;top:338px;font-size:12px;line-height:12px;font-weight:700;color:#fff;letter-spacing:0.05px;">I2C error:</div>
<div class="t" style="left:428px;top:336px;font-size:14px;line-height:14px;font-weight:700;color:#fff;letter-spacing:0.2px;">0</div>
<div style="left:128px;top:357px;width:481px;height:201px;background:#fff;border:1px solid #000;box-sizing:border-box"></div>
<div style="left:129px;top:406px;width:478px;height:2px;background:rgb(12,12,175);"></div>
<div style="left:129px;top:457px;width:478px;height:2px;background:rgb(195,35,195);"></div>
<div style="left:534px;top:358px;width:75px;height:20px;background:rgb(4,54,82);"></div>
<div style="left:534px;top:358px;width:7px;height:20px;background:rgb(10,110,158);"></div>
<div class="t" style="left:538px;top:362px;font-size:12px;line-height:12px;font-weight:700;color:#fff;letter-spacing:0.5px;">1.00</div>
<div style="left:129px;top:563px;width:20px;height:10px;background:#000;"></div>
<div class="t" style="left:153px;top:563px;font-size:12px;line-height:12px;font-weight:700;color:#fff;letter-spacing:-0.3px;">debug</div>
<div style="left:189px;top:563px;width:50px;height:10px;background:rgb(4,54,82);"></div>
<div style="left:189px;top:563px;width:25px;height:10px;background:rgb(10,110,158);"></div>
<div class="t" style="left:193px;top:562px;font-size:12px;line-height:12px;font-weight:700;color:#fff;letter-spacing:0.2px;">0</div>
<div style="left:249px;top:563px;width:20px;height:10px;background:#000;"></div>
<div class="t" style="left:273px;top:563px;font-size:12px;line-height:12px;font-weight:700;color:#fff;letter-spacing:-0.3px;">debug</div>
<div style="left:309px;top:563px;width:50px;height:10px;background:rgb(4,54,82);"></div>
<div style="left:309px;top:563px;width:25px;height:10px;background:rgb(10,110,158);"></div>
<div class="t" style="left:313px;top:562px;font-size:12px;line-height:12px;font-weight:700;color:#fff;letter-spacing:0.2px;">0</div>
<div style="left:369px;top:563px;width:20px;height:10px;background:#000;"></div>
<div class="t" style="left:393px;top:563px;font-size:12px;line-height:12px;font-weight:700;color:#fff;letter-spacing:-0.3px;">debug</div>
<div style="left:429px;top:563px;width:50px;height:10px;background:rgb(4,54,82);"></div>
<div style="left:429px;top:563px;width:25px;height:10px;background:rgb(10,110,158);"></div>
<div class="t" style="left:433px;top:562px;font-size:12px;line-height:12px;font-weight:700;color:#fff;letter-spacing:0.2px;">0</div>
<div style="left:489px;top:563px;width:20px;height:10px;background:#000;"></div>
<div class="t" style="left:513px;top:563px;font-size:12px;line-height:12px;font-weight:700;color:#fff;letter-spacing:-0.3px;">debug</div>
<div style="left:549px;top:563px;width:50px;height:10px;background:rgb(4,54,82);"></div>
<div style="left:549px;top:563px;width:25px;height:10px;background:rgb(10,110,158);"></div>
<div class="t" style="left:553px;top:562px;font-size:12px;line-height:12px;font-weight:700;color:#fff;letter-spacing:0.2px;">0</div>
<svg style="left:0;top:0" width="1018" height="582">
<defs><radialGradient id="sph" cx="45%" cy="42%" r="60%"><stop offset="0" stop-color="#d2d2d2"/><stop offset="0.6" stop-color="#a6a6a6"/><stop offset="1" stop-color="#6e6e6e"/></radialGradient></defs>
<g stroke="#fff" stroke-width="2">
<line x1="727" y1="457" x2="693" y2="428"/>
<line x1="727" y1="457" x2="754" y2="427"/>
<line x1="727" y1="457" x2="701" y2="485"/>
<line x1="727" y1="457" x2="765" y2="488"/>
</g>
<ellipse cx="681" cy="418" rx="16.5" ry="15" fill="rgb(200,120,12)" stroke="#fff" stroke-width="1.8" transform="rotate(20 681 418)"/>
<ellipse cx="764.5" cy="416" rx="17.5" ry="15" fill="rgb(200,178,42)" stroke="#fff" stroke-width="1.8"/>
<ellipse cx="690" cy="497.5" rx="17" ry="16.5" fill="rgb(200,178,42)" stroke="#fff" stroke-width="1.8" transform="rotate(-30 690 497.5)"/>
<ellipse cx="779" cy="501" rx="20.5" ry="17" fill="rgb(200,120,12)" stroke="#fff" stroke-width="1.8" transform="rotate(40 779 501)"/>
<g stroke="#fff" stroke-width="1.2">
<line x1="681" y1="419" x2="695" y2="430"/>
<line x1="770" y1="496" x2="760" y2="487"/>
<line x1="693" y1="493" x2="702" y2="485"/>
<line x1="752" y1="429" x2="757" y2="424"/>
</g>
<circle cx="727" cy="457.5" r="13" fill="url(#sph)" stroke="#3a3a3a" stroke-width="1"/>
<g stroke="rgb(130,238,130)" stroke-width="2.5" fill="none">
<line x1="724" y1="447" x2="720" y2="411"/>
<polyline points="713,435 720,411 735,435"/>
</g>
</svg>
<div class="t" style="left:677px;top:394px;font-size:12px;line-height:12px;font-weight:400;color:#fff;letter-spacing:0.1px;text-shadow:0.4px 0 0 #fff;transform:rotate(-1.8deg);transform-origin:0 60%">QUADRICOPTER X</div>
<svg style="left:0;top:0" width="1018" height="582">
<g fill="none" stroke="rgb(255,0,0)" stroke-width="2.8" stroke-linejoin="miter">
<path d="M668.5,402.5 H679 M673.5,397.5 L679,402.5 L674,407.5"/>
<path d="M774,398.5 H763.5 M769,393.5 L763.5,398.5 L768.5,403.5"/>
<path d="M699,480.5 H688.5 M694,475.5 L688.5,480.5 L693.5,485.5"/>
<path d="M764,483.5 H774.5 M769,478.5 L774.5,483.5 L769.5,488.5"/>
</g></svg>
<div class="t" style="left:676px;top:409px;font-size:15px;line-height:15px;font-weight:400;color:#000;letter-spacing:-0.3px;text-shadow:0.3px 0 0 #000">6</div>
<div class="t" style="left:755px;top:406px;font-size:15px;line-height:15px;font-weight:400;color:#000;letter-spacing:-0.3px;text-shadow:0.3px 0 0 #000">10</div>
<div class="t" style="left:684px;top:490px;font-size:15px;line-height:15px;font-weight:400;color:#000;letter-spacing:-0.3px;text-shadow:0.3px 0 0 #000">5</div>
<div class="t" style="left:773px;top:493px;font-size:15px;line-height:15px;font-weight:400;color:#000;letter-spacing:-0.3px;text-shadow:0.3px 0 0 #000">9</div>
</div>
</body></html>
